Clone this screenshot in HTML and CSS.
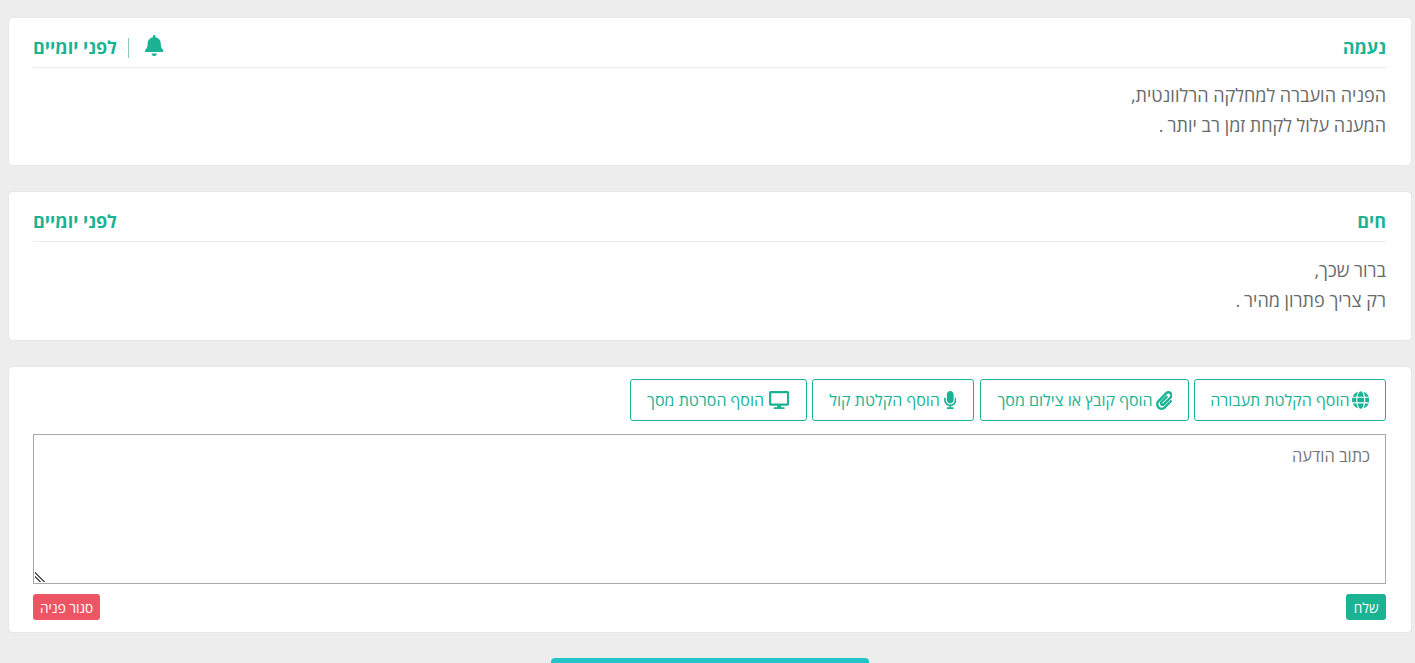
FILE: index.html
```html
<!DOCTYPE html>
<html lang="he" dir="rtl">
<head>
<meta charset="utf-8">
<title>פניה</title>
<link rel="stylesheet" href="styles.css">
</head>
<body>
<main class="page">
  <section class="card">
    <header class="msg-head">
      <span class="name">נעמה</span>
      <span class="meta">
        <svg class="bell" viewBox="0 0 448 512"><path d="M224 512c35.32 0 63.97-28.65 63.97-64H160.03c0 35.35 28.65 64 63.97 64zm215.39-149.71c-19.32-20.76-55.47-51.99-55.47-154.29 0-77.7-54.48-139.9-127.94-155.16V32c0-17.67-14.32-32-31.98-32s-31.98 14.33-31.98 32v20.84C118.56 68.1 64.08 130.3 64.08 208c0 102.3-36.15 133.53-55.47 154.29-6 6.45-8.66 14.16-8.61 21.71.11 16.4 12.98 32 32.1 32h383.8c19.12 0 32-15.6 32.1-32 .05-7.55-2.61-15.27-8.61-21.71z"/></svg>
        <span class="sep"></span>
        <span class="date">לפני יומיים</span>
      </span>
    </header>
    <p class="msg-body">הפניה הועברה למחלקה הרלוונטית,<br>המענה עלול לקחת זמן רב יותר<span class="stop">.</span></p>
  </section>
  <section class="card card-reply">
    <header class="msg-head">
      <span class="name">חים</span>
      <span class="meta"><span class="date">לפני יומיים</span></span>
    </header>
    <p class="msg-body">ברור שכך,<br>רק צריך פתרון מהיר<span class="stop">.</span></p>
  </section>
  <section class="card composer">
    <div class="tools">
      <button class="tool tool-a"><svg class="ico ico-globe" viewBox="0 0 496 512"><path d="M336.5 160C322 70.7 287.8 8 248 8s-74 62.7-88.5 152h177zM152 256c0 22.2 1.2 43.5 3.3 64h185.3c2.1-20.5 3.3-41.8 3.3-64s-1.2-43.5-3.3-64H155.3c-2.1 20.5-3.3 41.8-3.3 64zm324.7-96c-28.6-67.9-86.5-120.4-158-141.6 24.4 33.8 41.2 84.7 50 141.6h108zM177.2 18.4C105.8 39.6 47.8 92.1 19.3 160h108c8.7-56.9 25.5-107.8 49.9-141.6zM487.4 192H372.7c2.1 21 3.3 42.5 3.3 64s-1.2 43-3.3 64h114.6c5.5-20.5 8.6-41.8 8.6-64s-3.1-43.5-8.5-64zM120 256c0-21.5 1.2-43 3.3-64H8.6C3.2 212.5 0 233.8 0 256s3.2 43.5 8.6 64h114.6c-2-21-3.2-42.5-3.2-64zm39.5 96c14.5 89.3 48.7 152 88.5 152s74-62.7 88.5-152h-177zm159.3 141.6c71.4-21.2 129.4-73.7 158-141.6h-108c-8.8 56.9-25.6 107.8-50 141.6zM19.3 352c28.6 67.9 86.5 120.4 158 141.6-24.4-33.8-41.2-84.7-50-141.6h-108z"/></svg>הוסף הקלטת תעבורה</button>
      <button class="tool tool-b"><svg class="ico ico-clip" viewBox="0 0 448 512"><path d="M43.246 466.142c-58.43-60.289-57.341-157.511 1.386-217.581L254.392 34c44.316-45.332 116.351-45.336 160.671 0 43.89 44.894 43.943 117.329 0 162.276L232.214 383.128c-29.855 30.537-78.633 30.111-107.982-.998-28.275-29.97-27.368-77.473 1.452-106.953l143.743-146.835c6.182-6.314 16.312-6.422 22.626-.241l22.861 22.379c6.315 6.182 6.422 16.312.241 22.626L171.427 319.927c-4.932 5.045-5.236 13.428-.648 18.292 4.372 4.634 11.245 4.711 15.688.165l182.849-186.851c19.613-20.062 19.613-52.725-.011-72.798-19.189-19.627-49.957-19.637-69.154 0L90.39 293.295c-34.763 35.56-35.299 93.12-1.191 128.313 34.01 35.093 88.985 35.137 123.058.286l172.06-175.999c6.177-6.319 16.307-6.433 22.626-.256l22.877 22.364c6.319 6.177 6.434 16.307.256 22.626l-172.06 175.998c-59.576 60.938-155.943 60.216-214.77-.485z"/></svg>הוסף קובץ או צילום מסך</button>
      <button class="tool tool-c"><svg class="ico ico-mic" viewBox="0 0 352 512"><path d="M176 352c53.02 0 96-42.98 96-96V96c0-53.02-42.98-96-96-96S80 42.98 80 96v160c0 53.02 42.98 96 96 96zm160-160h-16c-8.84 0-16 7.16-16 16v48c0 74.8-64.49 134.82-140.79 127.38C96.71 376.89 48 317.11 48 250.3V208c0-8.84-7.16-16-16-16H16c-8.84 0-16 7.16-16 16v40.16c0 89.64 63.97 169.55 152 181.69V464H96c-8.84 0-16 7.16-16 16v16c0 8.84 7.16 16 16 16h160c8.84 0 16-7.16 16-16v-16c0-8.84-7.16-16-16-16h-56v-33.77C285.71 418.47 352 344.9 352 256v-48c0-8.84-7.16-16-16-16z"/></svg>הוסף הקלטת קול</button>
      <button class="tool tool-d"><svg class="ico ico-screen" viewBox="0 0 576 512"><path d="M528 0H48C21.5 0 0 21.5 0 48v320c0 26.5 21.5 48 48 48h192l-16 48h-72c-13.3 0-24 10.7-24 24s10.7 24 24 24h272c13.3 0 24-10.7 24-24s-10.7-24-24-24h-72l-16-48h192c26.5 0 48-21.5 48-48V48c0-26.5-21.5-48-48-48zm-16 352H64V64h448v288z"/></svg>הוסף הסרטת מסך</button>
    </div>
    <textarea class="message" placeholder="כתוב הודעה"></textarea>
    <div class="actions">
      <button class="btn btn-send">שלח</button>
      <button class="btn btn-close">סגור פניה</button>
    </div>
  </section>
  <button class="more" aria-label="עוד"></button>
</main>
</body>
</html>
```
FILE: styles.css
```css
* { box-sizing: border-box; }
html, body { margin: 0; height: 100%; overflow: hidden; }
body {
  background: #ededed;
  font-family: "Open Sans", "Noto Sans", "Liberation Sans", sans-serif;
  color: #676a6c;
}
.page {
  height: 663px;
  overflow: hidden;
  padding: 17px 3px 0 8px;
  display: flex;
  flex-direction: column;
  gap: 25px;
}
.card {
  flex: none;
  background: #fff;
  border: 1px solid #e7e7e7;
  border-radius: 5px;
  padding: 15px 25px 25px 24px;
}
.msg-head {
  display: flex;
  justify-content: space-between;
  align-items: center;
  height: 35px;
  padding-bottom: 7px;
  border-bottom: 1px solid #eaeaea;
  color: #1ab394;
  font-weight: 700;
  font-size: 18px;
}
.meta { display: flex; align-items: center; }
.bell { width: 18.4px; height: 21px; fill: #1ab394; margin-bottom: 3px; }
.sep { width: 1.5px; height: 20px; background: #8cc9ba; margin: 2px 16px 0 11px; }
.msg-body {
  margin: 12px 0 0;
  font-size: 18px;
  line-height: 30px;
}
.stop { margin-right: 4px; }
.card-reply .msg-body { margin-top: 13px; }
.composer { padding: 12px 25px 12px 24px; display: flex; flex-direction: column; }
.tools { display: flex; gap: 5px; }
.tool {
  height: 42px;
  border: 1px solid #1ab394;
  border-radius: 3px;
  background: #fff;
  color: #1ab394;
  font: 400 16px "Open Sans", "Noto Sans", "Liberation Sans", sans-serif;
  padding: 0 16px;
  display: flex;
  align-items: center;
  white-space: nowrap;
}
.tool-a { padding-left: 15px; }
.tool-c { margin-right: 1px; }
.ico { height: 18px; fill: #1ab394; flex: none; }
.ico-globe { width: 17.5px; margin-left: 2px; }
.ico-clip { width: 16.6px; height: 19px; margin-left: 3px; }
.ico-mic { width: 12.5px; margin: 0 1px 0 4px; }
.ico-screen { width: 20.25px; margin: 0 1px 0 5px; }
.message {
  display: block;
  width: 100%;
  height: 150px;
  margin-top: 13px;
  padding: 9px 15px;
  border: 1px solid #a9a9a9;
  border-radius: 0;
  font: 400 16.4px "Open Sans", "Noto Sans", "Liberation Sans", sans-serif;
  color: #676a6c;
  outline: none;
}
.message::placeholder { color: #757575; opacity: 1; }
.message::-webkit-resizer {
  background: linear-gradient(45deg, transparent 25%, #555 25% 35%, transparent 35% 45%, #555 45% 55%, transparent 55%) 1px 4px / 10px 10px no-repeat;
}
.actions { display: flex; justify-content: space-between; margin-top: 10px; }
.btn {
  height: 26px;
  border: 0;
  border-radius: 3px;
  color: #fff;
  padding: 0 7px;
  font: 400 13.6px "Open Sans", "Noto Sans", "Liberation Sans", sans-serif;
}
.btn-send { background: #1ab394; padding: 0 7.5px; }
.btn-close { background: #ed5565; }
.more {
  flex: none;
  align-self: center;
  width: 318px;
  height: 40px;
  border: 0;
  border-radius: 4px;
  background: #23c6c8;
}
```
